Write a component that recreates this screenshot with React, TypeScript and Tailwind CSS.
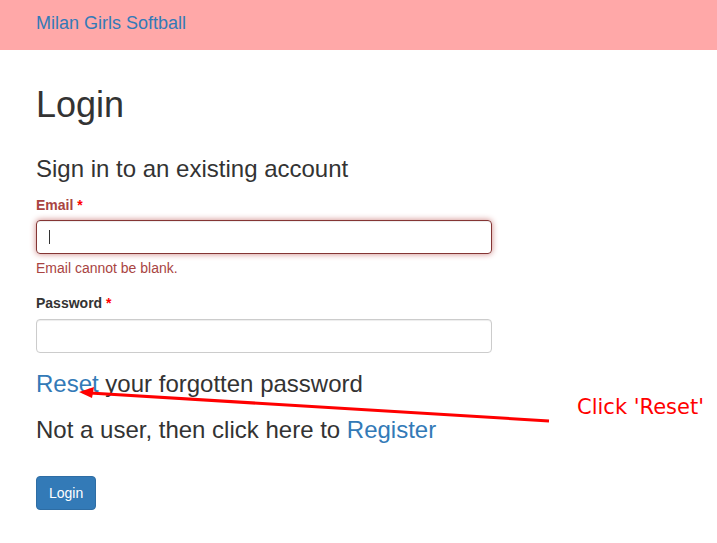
export default function App() {
  return (
    <div className="relative min-h-[543px] bg-white font-['Liberation_Sans',Arial,sans-serif] text-[#333] text-[14px] leading-[20px]">
      {/* navbar */}
      <nav className="h-[50px] bg-[#ffa8a8] flex items-center pl-9">
        <a href="#" className="text-[18px] leading-[20px] text-[#337ab7] -mt-[4px]">
          Milan Girls Softball
        </a>
      </nav>

      <div className="pl-9">
        <h1 className="mt-[35px] text-[36px] leading-[39.6px] font-normal">Login</h1>
        <h3 className="mt-[31px] text-[24px] leading-[26.4px] font-normal">
          Sign in to an existing account
        </h3>

        <form className="mt-[13px] w-[456px]">
          <div>
            <label className="block mb-[5px] font-bold text-[#a94442]">
              Email <span className="text-[red]">*</span>
            </label>
            <div className="relative">
              <input
                type="email"
                className="block w-full h-[34px] rounded-[4px] border border-[#843534] px-3 outline-none shadow-[inset_0_1px_1px_rgba(0,0,0,0.075),0_0_6px_#ce8483]"
              />
              <span className="absolute left-[13px] top-[10px] h-[14px] w-px bg-[#333]" />
            </div>
            <p className="mt-[4px] text-[#a94442]">Email cannot be blank.</p>
          </div>

          <div className="mt-[15px]">
            <label className="block mb-[6px] font-bold">
              Password <span className="text-[red]">*</span>
            </label>
            <input
              type="password"
              className="block w-full h-[34px] rounded-[4px] border border-[#ccc] px-3 outline-none shadow-[inset_0_1px_1px_rgba(0,0,0,0.075)]"
            />
          </div>
        </form>

        <h3 className="mt-[18px] text-[24px] leading-[26.4px] font-normal">
          <a href="#" className="text-[#337ab7]">Reset</a> your forgotten password
        </h3>
        <h3 className="mt-[20px] text-[24px] leading-[26.4px] font-normal">
          Not a user, then click here to <a href="#" className="text-[#337ab7]">Register</a>
        </h3>

        <button
          type="button"
          className="mt-[32px] h-[34px] px-3 rounded-[4px] bg-[#337ab7] border border-[#2e6da4] text-white text-[14px]"
        >
          Login
        </button>
      </div>

      {/* annotation */}
      <svg className="absolute left-0 top-0 pointer-events-none" width="717" height="543">
        <line x1="549" y1="421" x2="90" y2="393" stroke="#ff0000" strokeWidth="3" />
        <polygon points="79,392 94,387 92,398" fill="#ff0000" />
      </svg>
      <span className="absolute left-[577px] top-[395px] text-[21px] leading-[24px] text-[red] font-['DejaVu_Sans',sans-serif]">
        Click 'Reset'
      </span>
    </div>
  );
}
